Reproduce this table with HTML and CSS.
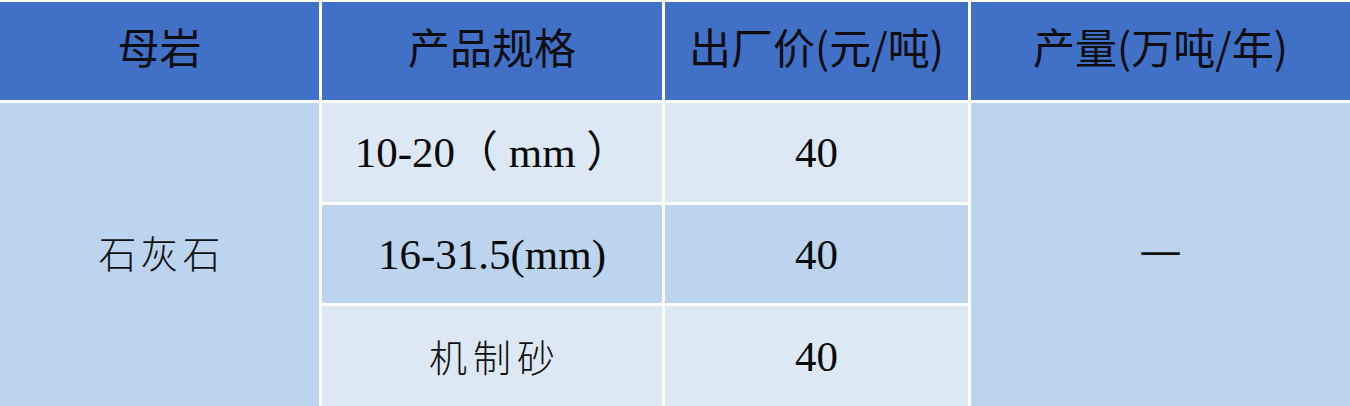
FILE: index.html
```html
<!DOCTYPE html>
<html lang="zh">
<head>
<meta charset="utf-8">
<link rel="stylesheet" href="styles.css">
</head>
<body>
<div class="table">
  <div class="cell head">母岩</div>
  <div class="cell head">产品规格</div>
  <div class="cell head">出厂价(元/吨)</div>
  <div class="cell head">产量(万吨/年)</div>

  <div class="cell dark rock cn">石灰石</div>
  <div class="cell light num">10-20（ mm ）</div>
  <div class="cell light num">40</div>
  <div class="cell dark output"><span class="dash">—</span></div>

  <div class="cell dark num">16-31.5(mm)</div>
  <div class="cell dark num">40</div>

  <div class="cell light cn sand">机制砂</div>
  <div class="cell light num">40</div>
</div>
</body>
</html>
```

FILE: styles.css
```css
html, body {
  margin: 0;
  padding: 0;
  background: #ffffff;
}

.table {
  display: grid;
  grid-template-columns: 319px 340px 303px 1fr;
  grid-template-rows: 98px 99px 98px 1fr;
  gap: 3px;
  padding-top: 2px;
  height: 406px;
  box-sizing: border-box;
  background: #ffffff;
  width: 1350px;
}

.cell {
  display: flex;
  align-items: center;
  justify-content: center;
  color: #111;
}

.head {
  background: #4171c6;
  font-family: "Noto Sans CJK SC", "Noto Sans", sans-serif;
  font-size: 42px;
  color: #0d0d12;
  line-height: 1;
  padding-bottom: 10px;
  box-sizing: border-box;
}

.dark {
  background: #bcd4ee;
}

.light {
  background: #dde8f5;
}

.num {
  font-family: "Liberation Serif", "Noto Sans CJK SC", serif;
  font-size: 43px;
  line-height: 1;
  color: #0a0a0a;
}

.cn {
  font-family: "Noto Sans CJK SC", sans-serif;
  font-weight: 300;
  font-size: 38px;
  line-height: 1;
}

.rock {
  grid-row: 2 / 5;
  grid-column: 1;
  letter-spacing: 4px;
  padding-left: 4px;
  padding-bottom: 6px;
  box-sizing: border-box;
}

.sand {
  letter-spacing: 6px;
  padding-left: 6px;
}

.output {
  grid-row: 2 / 5;
  grid-column: 4;
  padding-bottom: 10px;
  box-sizing: border-box;
}

.dash {
  font-family: "Liberation Serif", serif;
  font-size: 38px;
  font-weight: bold;
  line-height: 1;
}
```
